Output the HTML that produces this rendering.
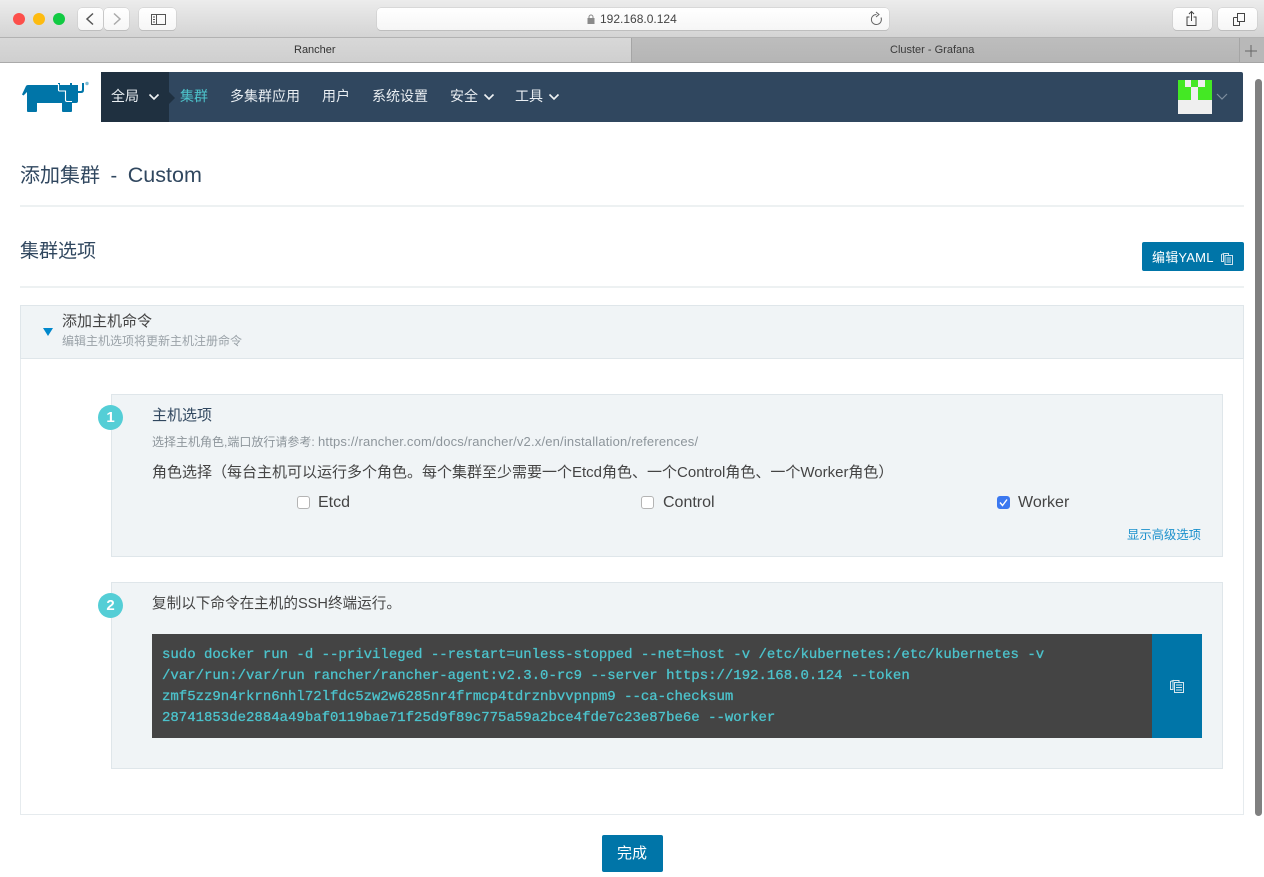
<!DOCTYPE html>
<html lang="zh">
<head>
<meta charset="utf-8">
<title>Rancher</title>
<style>
html,body{margin:0;padding:0;background:#fff}
body{width:1264px;height:877px;position:relative;overflow:hidden;font-family:"Liberation Sans","Noto Sans CJK SC",sans-serif;color:#444}
.a{position:absolute;white-space:nowrap;line-height:1}
.box{position:absolute;box-sizing:border-box}
.nav{color:#e9eef2;font-size:14px;top:89px}
.tb{position:absolute;box-sizing:border-box;background:linear-gradient(#fff,#f6f6f6);border-radius:4px;box-shadow:0 0 0 .5px #c8c8c8,0 1px 0 #b5b5b5}
.cb{position:absolute;box-sizing:border-box;width:13px;height:13px;top:496px;background:#fff;border:1px solid #b4b4b4;border-radius:3px}
.role{font-size:16px;top:495px;color:#444}
.step{position:absolute;left:98px;width:25px;height:25px;border-radius:50%;background:#54ced6;color:#fff;font-size:15px;font-weight:bold;text-align:center;line-height:25px}
</style>
</head>
<body>
<!-- browser chrome -->
<div class="box" style="left:0;top:0;width:1264px;height:38px;background:linear-gradient(#ececec,#d4d4d4);border-bottom:1px solid #b2b2b2"></div>
<div class="box" style="left:0;top:38px;width:632px;height:25px;background:linear-gradient(#d8d8d8,#cfcfcf);border-bottom:1px solid #aaa"></div>
<div class="box" style="left:631px;top:38px;width:610px;height:25px;background:linear-gradient(#bdbdbd,#b5b5b5);border-left:1px solid #a5a5a5;border-bottom:1px solid #a5a5a5"></div>
<div class="box" style="left:1239px;top:38px;width:25px;height:25px;background:#b8b8b8;border-left:1px solid #a5a5a5;border-bottom:1px solid #a5a5a5"></div>
<div class="box" style="left:13px;top:13px;width:12px;height:12px;border-radius:50%;background:#fc4f4b"></div>
<div class="box" style="left:33px;top:13px;width:12px;height:12px;border-radius:50%;background:#fdbb10"></div>
<div class="box" style="left:53px;top:13px;width:12px;height:12px;border-radius:50%;background:#11ca42"></div>
<div class="tb" style="left:78px;top:8px;width:25px;height:22px"></div>
<div class="tb" style="left:104px;top:8px;width:25px;height:22px"></div>
<div class="tb" style="left:139px;top:8px;width:37px;height:22px"></div>
<svg class="box" style="left:78px;top:8px" width="100" height="22" fill="none">
<path d="M15 5.500 9 11l6 5.500" stroke="#555" stroke-width="1.500"/>
<path d="M36 5.500 42 11l-6 5.500" stroke="#aaa" stroke-width="1.500"/>
<rect x="73.500" y="6.500" width="14" height="10" stroke="#555"/>
<path d="M78.500 6.500v10M75 9h2M75 11.500h2M75 14h2" stroke="#555"/>
</svg>
<div class="tb" style="left:377px;top:8px;width:512px;height:22px"></div>
<svg class="box" style="left:587px;top:14px" width="9" height="11"><rect x="0.500" y="4" width="7" height="6" fill="#8a8a8a"/><path d="M2 4.500V3a2 2 0 0 1 4 0v1.500" fill="none" stroke="#8a8a8a"/></svg>
<div class="a" style="left:600px;top:13px;font-size:12px;color:#444">192.168.0.124</div>
<svg class="box" style="left:869px;top:11px" width="15" height="16" fill="none"><path d="M7.500 3.500a5 5 0 1 0 4.500 3" stroke="#666"/><path d="M7 1l3 2.500-3 2.500" stroke="#666"/></svg>
<div class="tb" style="left:1173px;top:8px;width:39px;height:22px"></div>
<div class="tb" style="left:1218px;top:8px;width:39px;height:22px"></div>
<svg class="box" style="left:1173px;top:8px" width="84" height="22" fill="none" stroke="#444">
<path d="M16.500 9h-2.500v8.500h9V9h-2.500M18.500 13V3.500M16 6l2.500-2.500L21 6"/>
<rect x="64.500" y="5.500" width="7" height="8"/><path d="M60.500 9.500h4M60.500 9.500v8h6v-4"/>
</svg>
<div class="a" style="left:294px;top:45px;font-size:11px;color:#333">Rancher</div>
<div class="a" style="left:890px;top:45px;font-size:11px;color:#3a3a3a">Cluster - Grafana</div>
<svg class="box" style="left:1244px;top:44px" width="14" height="14" stroke="#666"><path d="M7 1v12M1 7h12"/></svg>

<!-- rancher logo -->
<svg class="box" style="left:0;top:70px" width="100" height="50" viewBox="0 70 100 50">
<path fill="#0075a8" d="M22 94.500 26 86Q26.500 85 28 85H58V83H60V85H70V83H72V85H78V91H81Q82 91 82 89V83H84V90Q84 93 81 93H78V101Q78 103 76 103H72V111Q72 112 71 112H63Q62 112 62 111V103H37V111Q37 112 36 112H28Q27 112 27 111V92L23.500 95.500Z"/>
<path d="M58.500 84V90Q58.500 91 60 91H65.500V100Q65.500 101.500 67 101.500H72" fill="none" stroke="#fff" stroke-width="1.100"/>
<circle cx="87" cy="83.500" r="1.700" fill="#7dbcd6"/>
</svg>

<!-- nav -->
<div class="box" style="left:101px;top:72px;width:1142px;height:50px;background:#30475f;border-radius:2px"></div>
<div class="box" style="left:101px;top:72px;width:68px;height:50px;background:#1f3040"></div>
<div class="box" style="left:169px;top:92px;border-left:6px solid #1f3040;border-top:6px solid transparent;border-bottom:6px solid transparent"></div>
<div class="a nav" style="left:111px">全局</div>
<div class="a nav" style="left:180px;color:#4dc4cc">集群</div>
<div class="a nav" style="left:230px">多集群应用</div>
<div class="a nav" style="left:322px">用户</div>
<div class="a nav" style="left:372px">系统设置</div>
<div class="a nav" style="left:450px">安全</div>
<div class="a nav" style="left:515px">工具</div>
<svg class="box" style="left:101px;top:72px" width="470" height="50" fill="none" stroke="#f0f3f5" stroke-width="1.600">
<path d="M48.500 22.500 53 27 57.500 22.500"/>
<path d="M383.500 22.500 388 27 392.500 22.500"/>
<path d="M448.500 22.500 453 27 457.500 22.500"/>
</svg>
<svg class="box" style="left:1178px;top:80px" width="34" height="34" shape-rendering="crispEdges">
<rect width="34" height="34" fill="#efefef"/>
<rect width="34" height="20" fill="#44e824"/>
<rect x="7" width="6" height="7" fill="#efefef"/><rect x="20" width="7" height="7" fill="#efefef"/>
<rect x="13" y="7" width="7" height="13" fill="#efefef"/>
</svg>
<svg class="box" style="left:1216px;top:92px" width="13" height="9" fill="none" stroke="#7e8e9e" stroke-width="1.200"><path d="M1 2l5 5 5-5"/></svg>
<!-- scrollbar -->
<div class="box" style="left:1255px;top:79px;width:7px;height:737px;background:#808080;border-radius:4px"></div>

<!-- header -->
<div class="a" style="left:20px;top:165px;font-size:20px;color:#30475f;word-spacing:5px">添加集群 - <span style="font-size:21.500px">Custom</span></div>
<div class="box" style="left:20px;top:205px;width:1224px;height:2px;background:#edf1f2"></div>
<div class="a" style="left:20px;top:242px;font-size:19px;color:#30475f">集群选项</div>
<div class="box" style="left:1142px;top:242px;width:102px;height:29px;background:#0075a8;border-radius:2px"></div>
<div class="a" style="left:1152px;top:251px;font-size:13px;letter-spacing:.2px;color:#fff">编辑YAML</div>
<svg class="box" style="left:1220px;top:251px" width="14" height="14" fill="none" stroke="#cfe3ee"><path d="M3.500 2.500v8h-2v-7zM3.500 2.500h5v2M5 4.500h7.500v9H5zM6.500 7h4.500M6.500 9h4.500M6.500 11h4.500"/></svg>
<div class="box" style="left:20px;top:286px;width:1224px;height:2px;background:#edf1f2"></div>

<!-- accordion -->
<div class="box" style="left:20px;top:305px;width:1224px;height:510px;border:1px solid #e6ebee;background:#fff"></div>
<div class="box" style="left:20px;top:305px;width:1224px;height:54px;border:1px solid #dfe6ea;background:#f0f4f6"></div>
<div class="box" style="left:43px;top:328px;border-top:8px solid #0088cc;border-left:5px solid transparent;border-right:5px solid transparent"></div>
<div class="a" style="left:62px;top:314px;font-size:15px;color:#444">添加主机命令</div>
<div class="a" style="left:62px;top:335px;font-size:12px;color:#9aa2a8">编辑主机选项将更新主机注册命令</div>

<!-- step 1 -->
<div class="box" style="left:111px;top:394px;width:1112px;height:163px;background:#f0f4f6;border:1px solid #dfe6ea"></div>
<div class="step" style="top:405px">1</div>
<div class="a" style="left:152px;top:408px;font-size:15px;color:#30475f">主机选项</div>
<div class="a" style="left:152px;top:435px;font-size:12px;color:#8d959b">选择主机角色,端口放行请参考: <span style="font-size:13px;letter-spacing:.18px">https://rancher.com/docs/rancher/v2.x/en/installation/references/</span></div>
<div class="a" style="left:152px;top:465px;font-size:15px;color:#444">角色选择（每台主机可以运行多个角色。每个集群至少需要一个Etcd角色、一个Control角色、一个Worker角色）</div>
<div class="cb" style="left:297px"></div>
<div class="a role" style="left:318px">Etcd</div>
<div class="cb" style="left:641px"></div>
<div class="a role" style="left:663px">Control</div>
<div class="cb" style="left:997px;background:#3b78f0;border-color:#3b78f0"></div>
<svg class="box" style="left:997px;top:496px" width="13" height="13" fill="none" stroke="#fff" stroke-width="1.400"><path d="M3 6.500 5.500 9.500 10 3.500"/></svg>
<div class="a role" style="left:1018px">Worker</div>
<div class="a" style="left:1127px;top:529px;font-size:12.330px;color:#1a90cc">显示高级选项</div>

<!-- step 2 -->
<div class="box" style="left:111px;top:582px;width:1112px;height:187px;background:#f0f4f6;border:1px solid #dfe6ea"></div>
<div class="step" style="top:593px">2</div>
<div class="a" style="left:152px;top:597px;font-size:14.600px;color:#444">复制以下命令在主机的SSH终端运行。</div>
<div class="box" style="left:152px;top:634px;width:1000px;height:104px;background:#444"></div>
<div class="box" style="left:1152px;top:634px;width:50px;height:104px;background:#0075a8"></div>
<svg class="box" style="left:1169px;top:678px" width="16" height="16" fill="none" stroke="#d8e8f0"><path d="M4 2.500v9H1.500v-8zM4 2.500h6v2M5.500 4.500h9v10h-9zM7 7h6M7 9.500h6M7 12h6"/></svg>
<div class="a" style="left:162px;top:645px;font:14px/21px 'Liberation Mono',monospace;-webkit-text-stroke:.3px #4cc3cc;color:#4cc3cc;white-space:pre">sudo docker run -d --privileged --restart=unless-stopped --net=host -v /etc/kubernetes:/etc/kubernetes -v
/var/run:/var/run rancher/rancher-agent:v2.3.0-rc9 --server https://192.168.0.124 --token
zmf5zz9n4rkrn6nhl72lfdc5zw2w6285nr4frmcp4tdrznbvvpnpm9 --ca-checksum
28741853de2884a49baf0119bae71f25d9f89c775a59a2bce4fde7c23e87be6e --worker</div>

<!-- footer button -->
<div class="box" style="left:602px;top:835px;width:61px;height:37px;background:#0075a8;border-radius:2px"></div>
<div class="a" style="left:617px;top:846px;font-size:15px;color:#fff">完成</div>
</body>
</html>
